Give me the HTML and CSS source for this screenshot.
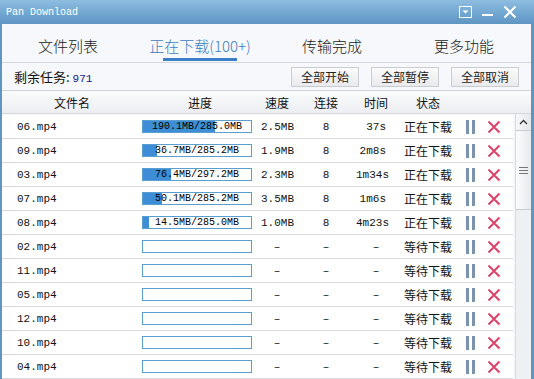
FILE: index.html
```html
<!DOCTYPE html>
<html lang="zh">
<head>
    <meta charset="UTF-8">
    <title>Pan Download</title>
    <link rel="stylesheet" href="styles.css">
</head>
<body>
    <div class="window">
        <div class="titlebar">
            <span class="title">Pan Download</span>
            <div class="controls">
                <svg width="13" height="12" viewBox="0 0 13 12"><rect x="0.5" y="0.5" width="12" height="11" fill="none" stroke="#fff"/><path d="M3.5 4.5h6l-3 3z" fill="#fff"/></svg>
                <svg width="11" height="12" viewBox="0 0 11 12"><rect x="0" y="8" width="11" height="2" fill="#fff"/></svg>
                <svg width="14" height="14" viewBox="0 0 14 14"><path d="M1.5 1.5l11 11M12.5 1.5l-11 11" stroke="#fff" stroke-width="2.2"/></svg>
            </div>
        </div>
        <div class="client">
            <div class="tabs">
                <div class="tab">文件列表</div>
                <div class="tab active">正在下载(100+)</div>
                <div class="tab">传输完成</div>
                <div class="tab">更多功能</div>
            </div>
            <div class="toolbar">
                <span class="remain">剩余任务: <b>971</b></span>
                <button class="btn">全部开始</button>
                <button class="btn">全部暂停</button>
                <button class="btn">全部取消</button>
            </div>
            <div class="head row">
                <span>文件名</span>
                <span>进度</span>
                <span>速度</span>
                <span>连接</span>
                <span>时间</span>
                <span>状态</span>
                <span></span>
                <span></span>
            </div>
            <div class="body">
                <div class="rows" id="rows"></div>
                <div class="scrollbar">
                    <div class="arrow">
                        <svg width="9" height="6" viewBox="0 0 9 6"><path d="M1 5l3.5-3.5L8 5" fill="none" stroke="#333" stroke-width="1.3"/></svg>
                    </div>
                    <div class="thumb"><i></i><i></i><i></i></div>
                </div>
            </div>
        </div>
    </div>

    <script>
        var tasks = [
            ['06.mp4', 190.1, '285.0', '2.5MB', '37s'],
            ['09.mp4', 36.7, '285.2', '1.9MB', '2m8s'],
            ['03.mp4', 76.4, '297.2', '2.3MB', '1m34s'],
            ['07.mp4', 50.1, '285.2', '3.5MB', '1m6s'],
            ['08.mp4', 14.5, '285.0', '1.0MB', '4m23s'],
            ['02.mp4'], ['11.mp4'], ['05.mp4'], ['12.mp4'], ['10.mp4'], ['04.mp4']
        ];

        var pause = '<svg width="10" height="14" viewBox="0 0 10 14"><rect x="0" y="0" width="3" height="14" fill="#7b93ad"/><rect x="6" y="0" width="3" height="14" fill="#7b93ad"/></svg>';
        var cross = '<svg width="14" height="14" viewBox="0 0 14 14"><path d="M1.5 1.5l11 11M12.5 1.5l-11 11" stroke="#e2406c" stroke-width="2"/></svg>';

        var html = '';
        tasks.forEach(function (t) {
            var active = t.length > 1;
            var bar = '<div class="bar">';
            if (active) {
                var pct = t[1] / parseFloat(t[2]) * 100;
                bar += '<div class="fill" style="width:' + pct.toFixed(1) + '%"></div>';
                bar += '<span class="bar-text">' + t[1].toFixed(1) + 'MB/' + t[2] + 'MB</span>';
            }
            bar += '</div>';
            html += '<div class="row' + (active ? '' : ' waiting') + '">' +
                '<span class="name">' + t[0] + '</span>' +
                '<span>' + bar + '</span>' +
                '<span class="speed">' + (active ? t[3] : '–') + '</span>' +
                '<span class="conn">' + (active ? '8' : '–') + '</span>' +
                '<span class="time">' + (active ? t[4] : '–') + '</span>' +
                '<span class="status">' + (active ? '正在下载' : '等待下载') + '</span>' +
                '<span class="icon">' + pause + '</span>' +
                '<span class="icon">' + cross + '</span>' +
                '</div>';
        });
        document.getElementById('rows').innerHTML = html;
    </script>
</body>
</html>
```

FILE: styles.css
```css
body {
    margin: 0;
    font-family: "Noto Sans CJK SC", sans-serif;
    font-size: 12px;
    color: #111;
}
.window {
    width: 534px;
    height: 379px;
    background: #5f95bf;
    display: flex;
    flex-direction: column;
    overflow: hidden;
}
.titlebar {
    height: 24px;
    flex-shrink: 0;
    display: flex;
    align-items: center;
    justify-content: space-between;
    padding: 0 17px 0 6px;
    background: linear-gradient(#8ebde0, #6fa5cf 60%, #5f96c1);
}
.title {
    font-family: "Liberation Mono", monospace;
    font-size: 10px;
    color: #fff;
}
.controls {
    display: flex;
    align-items: center;
    gap: 10px;
}
.client {
    flex: 1;
    margin: 0 3px 0 2px;
    background: #f6f8fb;
    display: flex;
    flex-direction: column;
    min-height: 0;
}
.tabs {
    height: 38px;
    flex-shrink: 0;
    display: flex;
    border-bottom: 1px solid #d3d8de;
}
.tab {
    width: 132px;
    display: flex;
    align-items: center;
    justify-content: center;
    padding-top: 4px;
    font-size: 15px;
    font-weight: 300;
    color: #1a1a1a;
    position: relative;
}
.tab.active {
    color: #3a7cc0;
}
.tab.active::after {
    content: "";
    position: absolute;
    bottom: 1px;
    left: 29px;
    width: 74px;
    height: 3px;
    background: #3b7fc6;
}
.toolbar {
    height: 27px;
    flex-shrink: 0;
    display: flex;
    align-items: center;
    gap: 12px;
    padding: 0 12px;
}
.remain {
    flex: 1;
    font-size: 13px;
}
.remain b {
    font-family: "Liberation Mono", monospace;
    font-weight: normal;
    font-size: 11px;
    color: #15158f;
}
.btn {
    width: 68px;
    height: 20px;
    padding: 0;
    font-family: "Noto Sans CJK SC", sans-serif;
    font-size: 12px;
    color: #222;
    border: 1px solid #c9ccd0;
    background: linear-gradient(#fbfbfb, #e9eaec);
}
.row {
    display: grid;
    grid-template-columns: 140px 116px 38px 60px 40px 64px 22px 24px;
    align-items: center;
    height: 23px;
    border-bottom: 1px solid #d4d7db;
    background: #fff;
}
.head {
    flex-shrink: 0;
    background: linear-gradient(#fafbfc, #eceef1);
    border-top: 1px solid #d0d4d9;
    height: 22px;
    text-align: center;
}
.body {
    flex: 1;
    display: flex;
    min-height: 0;
}
.rows {
    flex: 1;
    overflow: hidden;
    padding-top: 1px;
}
.name {
    padding-left: 15px;
    font-family: "Liberation Mono", monospace;
    font-size: 11px;
}
.bar {
    position: relative;
    width: 108px;
    height: 11px;
    border: 1px solid #5a9fcf;
    background: #fff;
}
.fill {
    height: 100%;
    background: #3d8ed6;
}
.bar-text {
    position: absolute;
    top: -1px;
    left: 0;
    right: 0;
    text-align: center;
    font-family: "Liberation Mono", monospace;
    font-size: 10px;
    line-height: 13px;
    color: #000;
}
.speed, .time {
    font-family: "Liberation Mono", monospace;
    font-size: 11px;
}
.speed {
    padding-left: 3px;
}
.conn {
    text-align: center;
    font-family: "Liberation Mono", monospace;
    font-size: 11px;
}
.time {
    text-align: right;
    padding-right: 10px;
}
.waiting .speed, .waiting .time {
    text-align: center;
    padding: 0;
}
.status {
    text-align: center;
    font-size: 12px;
}
.icon {
    display: flex;
    justify-content: center;
}
.scrollbar {
    width: 15px;
    margin-left: 2px;
    background: #eef1f4;
    border-left: 1px solid #d6dadf;
}
.arrow {
    height: 16px;
    display: flex;
    align-items: center;
    justify-content: center;
    background: linear-gradient(90deg, #f7f8fa, #e4e7eb);
    border-bottom: 1px solid #c8ccd2;
}
.thumb {
    height: 78px;
    display: flex;
    flex-direction: column;
    justify-content: center;
    align-items: center;
    gap: 2px;
    background: linear-gradient(90deg, #fbfcfd, #e6e9ed);
    border-bottom: 1px solid #c8ccd2;
}
.thumb i {
    width: 9px;
    height: 1px;
    background: #777;
}
```
